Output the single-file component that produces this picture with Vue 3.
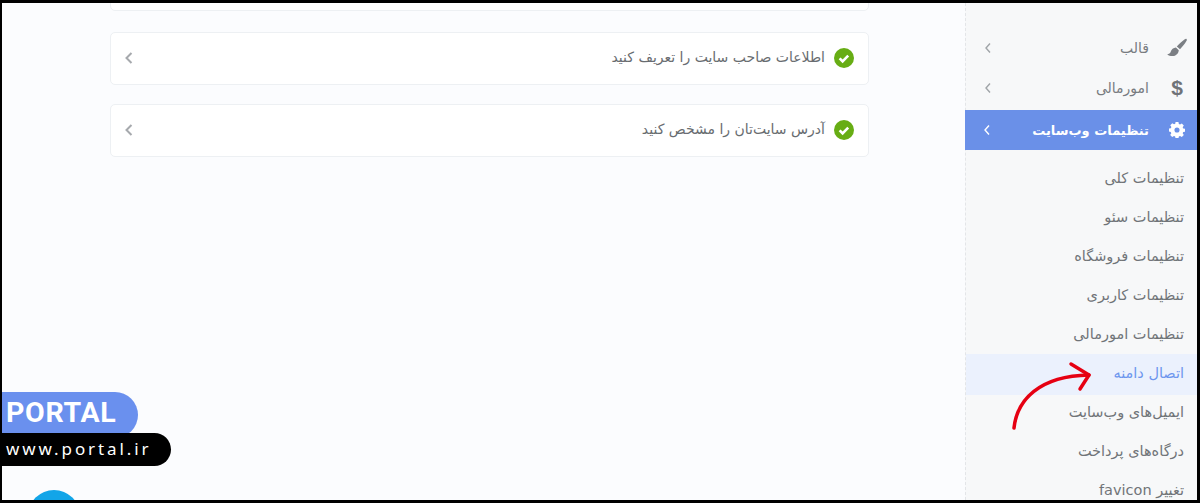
<template>
  <div class="frame">
    <main class="content">
      <div class="card card--stub"></div>
      <div v-for="task in tasks" :key="task" class="card">
        <span class="task">
          <svg class="check" viewBox="0 0 20 20">
            <circle cx="10" cy="10" r="10" fill="#67ad14" />
            <path d="M5.6 10.4l3 2.9 5.6-5.700" fill="none" stroke="#fff" stroke-width="2.6" />
          </svg>
          <span class="task-text">{{ task }}</span>
        </span>
        <svg class="chevron" viewBox="0 0 10 14">
          <path d="M7.5 2L2.5 7l5 5" fill="none" stroke="#a6a9ad" stroke-width="2" />
        </svg>
      </div>
    </main>

    <aside class="side">
      <div class="menu">
        <div
          v-for="item in menu"
          :key="item.label"
          class="menu-item"
          :class="{ 'menu-item--active': item.active }"
        >
          <span class="menu-slot">
            <svg v-if="item.icon === 'brush'" class="brush" viewBox="0 0 20 20">
              <path d="M19.500 .9c.6.5.4 1.400-.1 2.200-1.700 2.800-4 6-6.400 8.100L9.800 8.400c2.300-2.500 5.700-5.200 8-7.100.6-.5 1.200-.8 1.700-.4z" fill="#7b7f84" />
              <path d="M8.900 9.600l2.900 2.600c-.3 2.900-2.500 5.900-6.600 5.900-1.800 0-3.500-.5-5-1.900 1.800-.2 2.900-.9 3.400-2.300.8-2.300 2.800-4.200 5.300-4.300z" fill="#7b7f84" />
            </svg>
            <span v-else-if="item.icon === 'dollar'" class="dollar">$</span>
            <svg v-else class="gear" viewBox="0 0 20 20">
              <path fill="#fff" fill-rule="evenodd" d="M8.200 0h3.600l.5 2.500 1.500.7 2.200-1.400 2.500 2.500-1.400 2.200.7 1.500 2.500.5v3.600l-2.500.5-.7 1.500 1.400 2.200-2.500 2.500-2.200-1.400-1.500.7-.5 2.500H8.200l-.5-2.500-1.500-.7-2.200 1.400-2.500-2.500 1.400-2.200-.7-1.500L-.2 11.800V8.200l2.500-.5.7-1.500-1.400-2.200 2.500-2.500 2.200 1.400 1.500-.7zM10 6.800a3.200 3.200 0 1 0 0 6.400 3.200 3.200 0 0 0 0-6.400z" />
            </svg>
          </span>
          <span class="menu-label">{{ item.label }}</span>
          <svg class="menu-chevron" viewBox="0 0 10 14">
            <path d="M7 2.500L3 7l4 4.500" fill="none" :stroke="item.active ? '#fff' : '#a0a4a8'" stroke-width="1.400" />
          </svg>
        </div>
      </div>

      <div class="submenu">
        <div
          v-for="sub in submenu"
          :key="sub.label"
          class="sub-item"
          :class="{ 'sub-item--active': sub.active }"
        >
          {{ sub.label }}
        </div>
      </div>

      <svg class="arrow" viewBox="0 0 85 75">
        <path d="M5 68C8 40 30 16 80 15" fill="none" stroke="#e60012" stroke-width="3.500" stroke-linecap="round" />
        <path d="M62 4L80 15 71 29" fill="none" stroke="#e60012" stroke-width="3.500" stroke-linecap="round" stroke-linejoin="round" />
      </svg>
    </aside>

    <div class="brand">
      <div class="brand-name">PORTAL</div>
      <div class="brand-url">www.portal.ir</div>
    </div>
    <div class="bubble"></div>
  </div>
</template>

<script setup>
const tasks = ["اطلاعات صاحب سایت را تعریف کنید", "آدرس سایت‌تان را مشخص کنید"];

const menu = [
  { label: "قالب", icon: "brush" },
  { label: "امورمالی", icon: "dollar" },
  { label: "تنظیمات وب‌سایت", icon: "gear", active: true },
];

const submenu = [
  { label: "تنظیمات کلی" },
  { label: "تنظیمات سئو" },
  { label: "تنظیمات فروشگاه" },
  { label: "تنظیمات کاربری" },
  { label: "تنظیمات امورمالی" },
  { label: "اتصال دامنه", active: true },
  { label: "ایمیل‌های وب‌سایت" },
  { label: "درگاه‌های پرداخت" },
  { label: "تغییر favicon" },
];
</script>

<style>
html,
body {
  margin: 0;
  height: 503px;
  overflow: hidden;
  background: #000;
}
</style>

<style scoped>
.frame {
  position: relative;
  box-sizing: border-box;
  width: 1200px;
  height: 503px;
  display: flex;
  overflow: hidden;
  border: solid #000;
  border-width: 3px 3px 3px 2px;
  background: #fbfcfe;
  font-family: "DejaVu Sans", "Noto Sans", sans-serif;
}

.content {
  flex: 1;
  min-width: 0;
  padding-left: 108px;
  margin-top: -32px;
  display: flex;
  flex-direction: column;
  gap: 19.500px;
}

.card {
  box-sizing: border-box;
  width: 759px;
  height: 52.500px;
  flex: none;
  display: flex;
  direction: rtl;
  align-items: center;
  justify-content: space-between;
  padding: 0 14px 0 13px;
  background: #fff;
  border: 1px solid #edf0f3;
  border-radius: 5px;
}

.card--stub {
  height: 40px;
  margin-bottom: 1.500px;
}

.task {
  display: flex;
  align-items: center;
  gap: 9px;
  font-size: 14px;
  color: #686c70;
}

.task-text {
  margin-bottom: 2px;
}

.check {
  width: 20px;
  height: 20px;
  flex: none;
}

.chevron {
  width: 10px;
  height: 14px;
}

.side {
  position: relative;
  width: 232px;
  flex: none;
  box-sizing: border-box;
  background: #f7f8f9;
  border-left: 1px dashed #e3e5e8;
  direction: rtl;
  padding-top: 25px;
}

.menu-item {
  height: 40px;
  display: flex;
  align-items: center;
  padding: 0 10px 0 17px;
  font-size: 14px;
  color: #777b80;
}

.menu-item--active {
  margin: 2px 0 0 -1px;
  background: #6a90e8;
  color: #fff;
  font-size: 13px;
  font-weight: 700;
}

.menu-slot {
  width: 20px;
  height: 20px;
  flex: none;
  display: flex;
  align-items: center;
  justify-content: center;
}

.brush {
  width: 20px;
  height: 20px;
}

.gear {
  width: 16px;
  height: 16px;
}

.dollar {
  font-family: "Liberation Sans", sans-serif;
  font-size: 21px;
  font-weight: 700;
  line-height: 20px;
  color: #6f7378;
}

.menu-label {
  margin-right: 18px;
}

.menu-chevron {
  width: 10px;
  height: 14px;
  margin-right: auto;
}

.submenu {
  margin-top: 9px;
}

.sub-item {
  height: 39px;
  line-height: 38px;
  padding-right: 13px;
  font-size: 14.500px;
  color: #707478;
}

.sub-item--active {
  height: 41px;
  margin-bottom: -2px;
  line-height: 38px;
  background: #ebf1fd;
  color: #6d96ee;
}

.arrow {
  position: absolute;
  left: 43px;
  top: 357px;
  width: 85px;
  height: 75px;
}

.brand {
  position: absolute;
  left: -2px;
  top: 389px;
}

.brand-name {
  box-sizing: border-box;
  width: 138px;
  height: 46px;
  margin-bottom: -5px;
  padding-left: 6px;
  background: #6a90ee;
  border-radius: 0 23px 23px 0;
  color: #fff;
  font-family: Roboto, sans-serif;
  font-size: 28.500px;
  font-weight: 700;
  line-height: 42px;
  letter-spacing: 0.700px;
}

.brand-url {
  position: relative;
  box-sizing: border-box;
  width: 171px;
  height: 33px;
  padding-left: 6px;
  background: #000;
  border-radius: 0 17px 17px 0;
  color: #fff;
  font-family: "Noto Sans", sans-serif;
  font-size: 17px;
  line-height: 32px;
  letter-spacing: 2.900px;
}

.bubble {
  position: absolute;
  left: 26px;
  top: 487px;
  width: 52px;
  height: 52px;
  border-radius: 50%;
  background: #12a5e8;
}
</style>
